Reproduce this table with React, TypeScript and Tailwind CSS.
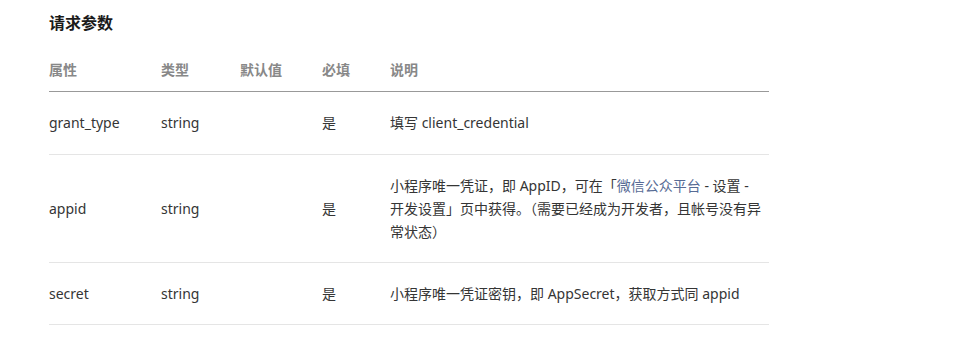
import React from "react";

const font = { fontFamily: '"Noto Sans", "Noto Sans CJK SC", sans-serif' };

export default function App() {
  const rows = [
    {
      name: "grant_type",
      type: "string",
      def: "",
      req: "是",
      desc: <>填写 client_credential</>,
      pad: "pt-[19px] pb-[20px]",
    },
    {
      name: "appid",
      type: "string",
      def: "",
      req: "是",
      desc: (
        <>
          小程序唯一凭证，即 AppID，可在「<span className="text-[#576b95]">微信公众平台</span> - 设置 -
          <br />
          开发设置」页中获得。（需要已经成为开发者，且帐号没有异
          <br />
          常状态）
        </>
      ),
      pad: "pt-[19px] pb-[19px]",
    },
    {
      name: "secret",
      type: "string",
      def: "",
      req: "是",
      desc: <>小程序唯一凭证密钥，即 AppSecret，获取方式同 appid</>,
      pad: "pt-[19px] pb-[19px]",
    },
  ];
  return (
    <div className="w-[977px] h-[343px] bg-white overflow-hidden" style={font}>
      <div className="ml-[49px] w-[720px] pt-[11px]">
        <h2 className="text-[16px] leading-[24px] font-bold text-[#1a1a1a] mb-[14px]">请求参数</h2>
        <div className="grid grid-cols-[112px_79px_82px_68px_1fr] text-[14px] leading-[22px] font-bold text-[#888888] py-[10px] border-b border-[#999999]">
          <div>属性</div>
          <div>类型</div>
          <div>默认值</div>
          <div>必填</div>
          <div>说明</div>
        </div>
        {rows.map((r, i) => (
          <div
            key={i}
            className={`grid grid-cols-[112px_79px_82px_68px_1fr] items-center text-[14px] leading-[23px] text-[#353535] border-b border-[#e5e5e5] ${r.pad}`}
          >
            <div>{r.name}</div>
            <div>{r.type}</div>
            <div>{r.def}</div>
            <div>{r.req}</div>
            <div className="whitespace-nowrap">{r.desc}</div>
          </div>
        ))}
      </div>
    </div>
  );
}
